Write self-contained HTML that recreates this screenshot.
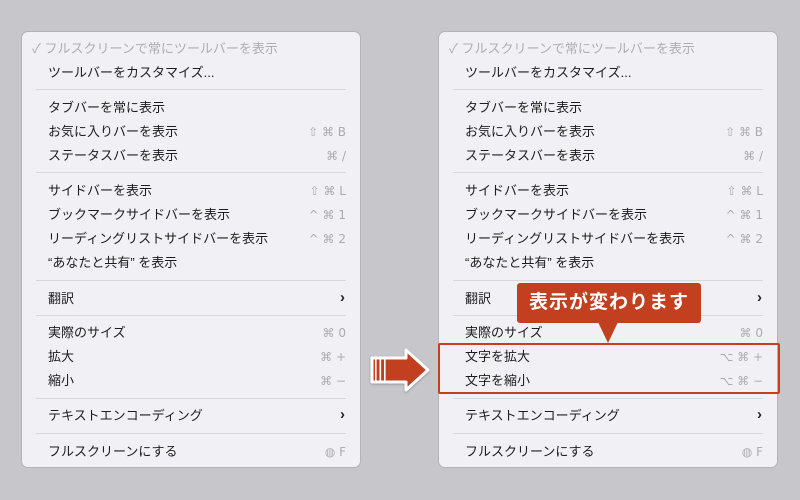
<!DOCTYPE html>
<html><head><meta charset="utf-8">
<style>
*{margin:0;padding:0;box-sizing:border-box}
body{width:800px;height:500px;background:#c6c6cb;position:relative;overflow:hidden;font-family:"Liberation Sans","Noto Sans CJK JP",sans-serif;color:#1d1d1f}
.menu{position:absolute;top:31px;width:340px;height:437px;background:#f1f1f5;border:1px solid #b3b3b8;border-radius:7px}
.it{position:absolute;left:26px;font-size:13px;line-height:16px;white-space:nowrap}
.sc{position:absolute;right:14px;font-family:"DejaVu Sans","Liberation Sans",sans-serif;font-size:12px;line-height:16px;color:#acacb0;white-space:pre;word-spacing:0}
.ch{position:absolute;right:15px;font-size:15px;font-weight:bold;line-height:16px;color:#222}
.sep{position:absolute;left:14px;right:14px;height:1px;background:#d8d8dc}
.dis{color:#aeaeb2}
</style></head><body>

<div class="menu" style="left:21px">
<div class="it dis" style="left:10px;top:9px">✓ フルスクリーンで常にツールバーを表示</div>
<div class="it" style="top:33px">ツールバーをカスタマイズ...</div>
<div class="sep" style="top:57px"></div>
<div class="it" style="top:68px">タブバーを常に表示</div>
<div class="it" style="top:92px">お気に入りバーを表示</div><div class="sc" style="top:92px">⇧ ⌘ B</div>
<div class="it" style="top:116px">ステータスバーを表示</div><div class="sc" style="top:116px">⌘ /</div>
<div class="sep" style="top:140px"></div>
<div class="it" style="top:151px">サイドバーを表示</div><div class="sc" style="top:151px">⇧ ⌘ L</div>
<div class="it" style="top:175px">ブックマークサイドバーを表示</div><div class="sc" style="top:175px">^ ⌘ 1</div>
<div class="it" style="top:199px">リーディングリストサイドバーを表示</div><div class="sc" style="top:199px">^ ⌘ 2</div>
<div class="it" style="top:223px">“あなたと共有” を表示</div>
<div class="sep" style="top:248px"></div>
<div class="it" style="top:259px">翻訳</div><div class="ch" style="top:258px">›</div>
<div class="sep" style="top:283px"></div>
<div class="it" style="top:293px">実際のサイズ</div><div class="sc" style="top:293px">⌘ 0</div>
<div class="it" style="top:317px">拡大</div><div class="sc" style="top:317px">⌘ +</div>
<div class="it" style="top:341px">縮小</div><div class="sc" style="top:341px">⌘ −</div>
<div class="sep" style="top:366px"></div>
<div class="it" style="top:376px">テキストエンコーディング</div><div class="ch" style="top:375px">›</div>
<div class="sep" style="top:401px"></div>
<div class="it" style="top:412px">フルスクリーンにする</div><div class="sc" style="top:412px">◍ F</div>
</div>

<div class="menu" style="left:438px">
<div class="it dis" style="left:10px;top:9px">✓ フルスクリーンで常にツールバーを表示</div>
<div class="it" style="top:33px">ツールバーをカスタマイズ...</div>
<div class="sep" style="top:57px"></div>
<div class="it" style="top:68px">タブバーを常に表示</div>
<div class="it" style="top:92px">お気に入りバーを表示</div><div class="sc" style="top:92px">⇧ ⌘ B</div>
<div class="it" style="top:116px">ステータスバーを表示</div><div class="sc" style="top:116px">⌘ /</div>
<div class="sep" style="top:140px"></div>
<div class="it" style="top:151px">サイドバーを表示</div><div class="sc" style="top:151px">⇧ ⌘ L</div>
<div class="it" style="top:175px">ブックマークサイドバーを表示</div><div class="sc" style="top:175px">^ ⌘ 1</div>
<div class="it" style="top:199px">リーディングリストサイドバーを表示</div><div class="sc" style="top:199px">^ ⌘ 2</div>
<div class="it" style="top:223px">“あなたと共有” を表示</div>
<div class="sep" style="top:248px"></div>
<div class="it" style="top:259px">翻訳</div><div class="ch" style="top:258px">›</div>
<div class="sep" style="top:283px"></div>
<div class="it" style="top:293px">実際のサイズ</div><div class="sc" style="top:293px">⌘ 0</div>
<div class="it" style="top:317px">文字を拡大</div><div class="sc" style="top:317px">⌥ ⌘ +</div>
<div class="it" style="top:341px">文字を縮小</div><div class="sc" style="top:341px">⌥ ⌘ −</div>
<div class="sep" style="top:366px"></div>
<div class="it" style="top:376px">テキストエンコーディング</div><div class="ch" style="top:375px">›</div>
<div class="sep" style="top:401px"></div>
<div class="it" style="top:412px">フルスクリーンにする</div><div class="sc" style="top:412px">◍ F</div>
</div>

<!-- highlight box -->
<div style="position:absolute;left:438px;top:343px;width:342px;height:51px;border:2px solid #c2401f;border-radius:2px"></div>

<!-- tooltip -->
<div style="position:absolute;left:517px;top:283px;width:184px;height:40px;background:#c2401f;border-radius:3px;color:#fff;font-size:19px;font-weight:bold;line-height:40px;text-align:center;letter-spacing:1px">表示が変わります</div>
<div style="position:absolute;left:598px;top:322px;width:0;height:0;border-left:10px solid transparent;border-right:10px solid transparent;border-top:21px solid #c2401f"></div>

<!-- arrow -->
<svg style="position:absolute;left:366px;top:344px;overflow:visible" width="68" height="52" viewBox="0 0 68 52">
<path d="M6 14 H40 V6 L62 26 L40 46 V38 H6 Z" fill="#c2401f" stroke="#fff" stroke-width="3" stroke-linejoin="round" style="filter:drop-shadow(0 1px 1px rgba(0,0,0,0.25))"/>
<rect x="9" y="15.5" width="1.6" height="21" fill="#fff"/>
<rect x="13.5" y="15.5" width="1.6" height="21" fill="#fff"/>
<rect x="18" y="15.5" width="1.6" height="21" fill="#fff"/>
</svg>

</body></html>
